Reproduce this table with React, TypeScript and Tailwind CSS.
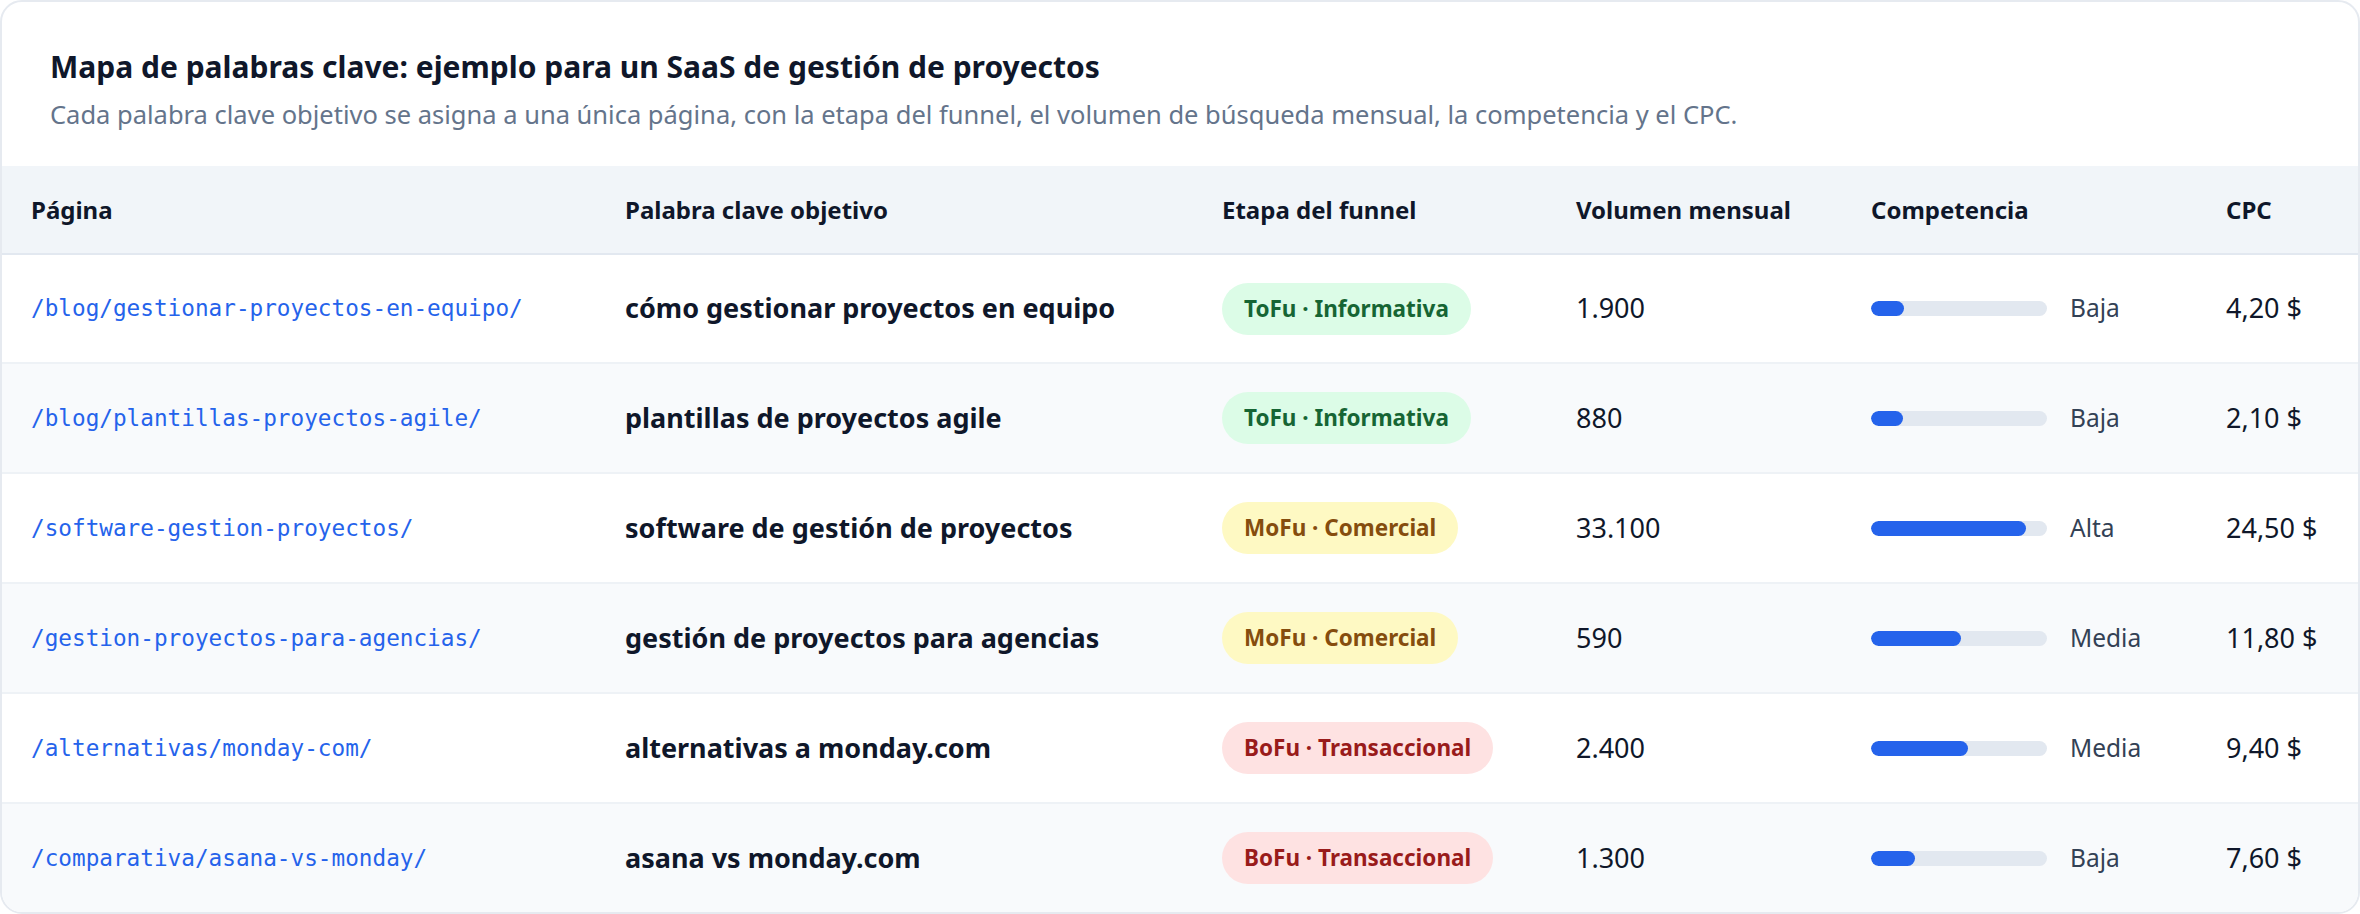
import React from 'react'

type Stage = 'tofu' | 'mofu' | 'bofu'

interface Row {
  url:     string
  keyword: string
  stage:   Stage
  volume:  string
  level:   string
  score:   number
  cpc:     string
}

const rows: Row[] = [
  { url: '/blog/gestionar-proyectos-en-equipo/', keyword: 'cómo gestionar proyectos en equipo', stage: 'tofu', volume: '1.900',  level: 'Baja',  score: 19, cpc: '4,20 $' },
  { url: '/blog/plantillas-proyectos-agile/',    keyword: 'plantillas de proyectos agile',      stage: 'tofu', volume: '880',    level: 'Baja',  score: 18, cpc: '2,10 $' },
  { url: '/software-gestion-proyectos/',         keyword: 'software de gestión de proyectos',   stage: 'mofu', volume: '33.100', level: 'Alta',  score: 88, cpc: '24,50 $' },
  { url: '/gestion-proyectos-para-agencias/',    keyword: 'gestión de proyectos para agencias', stage: 'mofu', volume: '590',    level: 'Media', score: 51, cpc: '11,80 $' },
  { url: '/alternativas/monday-com/',            keyword: 'alternativas a monday.com',          stage: 'bofu', volume: '2.400',  level: 'Media', score: 55, cpc: '9,40 $' },
  { url: '/comparativa/asana-vs-monday/',        keyword: 'asana vs monday.com',                stage: 'bofu', volume: '1.300',  level: 'Baja',  score: 25, cpc: '7,60 $' },
]

const stageStyles: Record<Stage, { label: string; className: string }> = {
  tofu: { label: 'ToFu · Informativa',   className: 'bg-[#dcfce7] text-[#166534]' },
  mofu: { label: 'MoFu · Comercial',     className: 'bg-[#fef9c3] text-[#854d0e]' },
  bofu: { label: 'BoFu · Transaccional', className: 'bg-[#fee2e2] text-[#991b1b]' },
}

const cols = 'grid grid-cols-[593px_597px_354px_295px_355px_1fr]'

function StageBadge({ stage }: { stage: Stage }) {
  const s = stageStyles[stage]
  return (
    <span className={`inline-flex h-[52px] items-center rounded-full px-[22px] text-[22.5px] font-bold ${s.className}`}>
      {s.label}
    </span>
  )
}

export default function App() {
  return (
    <div className="min-h-screen bg-white font-['Noto_Sans',sans-serif]">
      <div className="overflow-hidden rounded-[22px] border-2 border-[#e6eaf0] bg-white">
        {/* Cabecera */}
        <div className="px-[48px] pt-[44px] pb-[33px]">
          <h2 className="text-[30px] leading-[42px] font-bold text-[#0f172a]">
            Mapa de palabras clave: ejemplo para un SaaS de gestión de proyectos
          </h2>
          <p className="mt-[7px] text-[25.5px] leading-[38px] text-[#64748b]">
            Cada palabra clave objetivo se asigna a una única página, con la etapa del funnel, el volumen de búsqueda mensual, la competencia y el CPC.
          </p>
        </div>

        {/* Tabla */}
        <div className={`${cols} h-[89px] items-center border-b-2 border-[#e2e8f0] bg-[#f1f5f9] text-[24px] font-bold text-[#0f172a]`}>
          <div className="pl-[29px]">Página</div>
          <div className="pl-[30px]">Palabra clave objetivo</div>
          <div className="pl-[30px]">Etapa del funnel</div>
          <div className="pl-[30px]">Volumen mensual</div>
          <div className="pl-[30px]">Competencia</div>
          <div className="pl-[30px]">CPC</div>
        </div>

        {rows.map((r, i) => (
          <div
            key={r.url}
            className={`${cols} items-center ${i === 0 ? 'h-[107px]' : 'h-[110px] border-t-2 border-[#eef2f6]'} ${i % 2 === 1 ? 'bg-[#f8fafc]' : 'bg-white'}`}
          >
            <div className="pl-[29px] font-['DejaVu_Sans_Mono',monospace] text-[22.7px] text-[#2563eb]">
              {r.url}
            </div>
            <div className="pl-[30px] text-[27px] font-bold text-[#0f172a]">{r.keyword}</div>
            <div className="pl-[30px]">
              <StageBadge stage={r.stage} />
            </div>
            <div className="pl-[30px] text-[27px] text-[#0f172a]">{r.volume}</div>
            <div className="flex items-center gap-[23px] pl-[30px]">
              <div className="h-[15px] w-[176px] overflow-hidden rounded-full bg-[#e2e8f0]">
                <div className="h-full rounded-full bg-[#2563eb]" style={{ width: `${r.score}%` }} />
              </div>
              <span className="text-[24.5px] text-[#334155]">{r.level}</span>
            </div>
            <div className="pl-[30px] text-[27px] text-[#0f172a]">{r.cpc}</div>
          </div>
        ))}
      </div>
    </div>
  )
}
